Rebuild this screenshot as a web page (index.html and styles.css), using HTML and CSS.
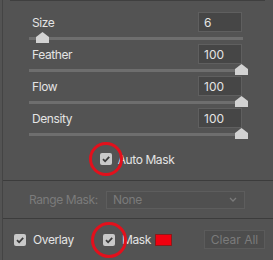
FILE: index.html
```html
<!DOCTYPE html>
<html>
  <head>
    <title>Refine Brush</title>
    <link rel="stylesheet" href="styles.css">
  </head>
  <body>
    <div class="panel">
      <div class="topline"></div>
      <div class="sliders">
        <div class="slider">
          <div class="head"><label>Size</label><input class="num" type="text" value="6" /></div>
          <div class="track"><span class="thumb" style="left: 13px"></span></div>
        </div>
        <div class="slider">
          <div class="head"><label>Feather</label><input class="num" type="text" value="100" /></div>
          <div class="track"><span class="thumb" style="left: 212px"></span></div>
        </div>
        <div class="slider">
          <div class="head"><label>Flow</label><input class="num" type="text" value="100" /></div>
          <div class="track"><span class="thumb" style="left: 212px"></span></div>
        </div>
        <div class="slider">
          <div class="head"><label>Density</label><input class="num" type="text" value="100" /></div>
          <div class="track"><span class="thumb" style="left: 212px"></span></div>
        </div>
      </div>
      <div class="automask">
        <span class="check ringed">
          <svg width="12" height="12" viewBox="0 0 12 12"><path d="M3 6.2 L5.1 8.3 L9.2 3.8" fill="none" stroke="#3c3c3c" stroke-width="1.8"/></svg>
          <span class="ring"></span>
        </span>
        <label>Auto Mask</label>
      </div>
      <div class="range">
        <label>Range Mask:</label>
        <div class="select">
          <span>None</span>
          <svg width="8" height="5" viewBox="0 0 8 5"><path d="M1 1 L4 4 L7 1" fill="none" stroke="#7a7a7a" stroke-width="1.3"/></svg>
        </div>
      </div>
      <div class="bottom">
        <span class="check">
          <svg width="12" height="12" viewBox="0 0 12 12"><path d="M3 6.2 L5.1 8.3 L9.2 3.8" fill="none" stroke="#3c3c3c" stroke-width="1.8"/></svg>
        </span>
        <label class="overlay">Overlay</label>
        <span class="check ringed big">
          <svg width="12" height="12" viewBox="0 0 12 12"><path d="M3 6.2 L5.1 8.3 L9.2 3.8" fill="none" stroke="#3c3c3c" stroke-width="1.8"/></svg>
          <span class="ring"></span>
        </span>
        <label class="mask">Mask</label>
        <span class="swatch"></span>
        <button class="clear">Clear All</button>
      </div>
    </div>
  </body>
</html>
```

FILE: styles.css
```css
body{
    margin: 0;
    background: #535353;
    font-family: Inter, "Liberation Sans", sans-serif;
    font-size: 12px;
    letter-spacing: -0.4px;
    color: #e4e4e4;
    overflow: hidden;
}
.panel{
    width: 271px;
    height: 260px;
    margin-left: 2px;
    border-left: 1px solid #444;
    box-sizing: border-box;
}
.topline{
    height: 1px;
    width: 255px;
    margin-left: 7px;
    background: #3f3f3f;
}
.sliders{
    padding: 11px 0 0 26px;
}
.slider{
    width: 214px;
    height: 32px;
}
.head{
    display: flex;
    justify-content: space-between;
    align-items: center;
    height: 20px;
}
.head label{
    padding-left: 3px;
}
.num{
    width: 44px;
    height: 20px;
    box-sizing: border-box;
    margin: 0 1px 0 0;
    padding: 0 5px;
    background: #464646;
    border: 1px solid #5f5f5f;
    color: #e4e4e4;
    font-family: inherit;
    font-size: 12px;
    letter-spacing: 0;
    outline: none;
}
.track{
    position: relative;
    height: 3px;
    margin-top: 5px;
    background: #6e6e6e;
}
.thumb{
    position: absolute;
    top: -5px;
    width: 13px;
    height: 11px;
    margin-left: -6px;
    background: #d2d2d2;
    clip-path: polygon(50% 0, 100% 45%, 100% 100%, 0 100%, 0 45%);
}
.automask{
    display: flex;
    justify-content: center;
    align-items: center;
    gap: 6px;
    height: 20px;
    margin: 9px 0 11px 0;
    padding-right: 2px;
}
.check{
    position: relative;
    display: inline-flex;
    width: 12px;
    height: 12px;
    background: #c9c9c9;
    border-radius: 2px;
}
.ring{
    position: absolute;
    left: -11px;
    top: -11px;
    width: 28px;
    height: 28px;
    border: 3px solid #e3101c;
    border-radius: 50%;
}
.big .ring{
    left: -12px;
    top: -12px;
    width: 30px;
    height: 30px;
}
.range{
    display: flex;
    align-items: center;
    height: 37px;
    border-top: 1px solid #3c3c3c;
    border-bottom: 1px solid #3c3c3c;
    padding-left: 26px;
    color: #7b7b7b;
}
.select{
    display: flex;
    justify-content: space-between;
    align-items: center;
    width: 139px;
    height: 18px;
    box-sizing: border-box;
    margin-left: auto;
    margin-right: 28px;
    padding: 0 7px 0 6px;
    border: 1px solid #5d5d5d;
    background: #505050;
}
.bottom{
    display: flex;
    align-items: center;
    height: 41px;
    padding-left: 11px;
}
.overlay{
    margin-left: 7px;
}
.bottom .big{
    margin-left: auto;
}
.mask{
    margin-left: 7px;
}
.swatch{
    width: 17px;
    height: 12px;
    margin-left: 4px;
    background: #f2000f;
    border: 1px solid #8a1a1a;
    box-sizing: border-box;
}
.clear{
    width: 61px;
    height: 19px;
    margin-left: 32px;
    margin-right: 8px;
    padding: 0;
    background: #4d4d4d;
    border: 1px solid #5b5b5b;
    color: #7b7b7b;
    font-family: inherit;
    font-size: 12px;
}
```
